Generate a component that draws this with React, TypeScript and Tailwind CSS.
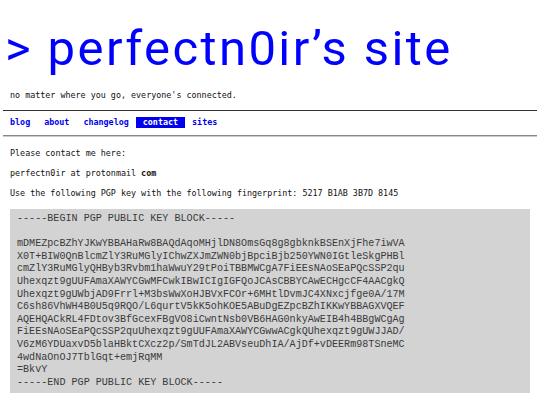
const links = ["blog", "about", "changelog", "contact", "sites"];

const pgpKey = `-----BEGIN PGP PUBLIC KEY BLOCK-----

mDMEZpcBZhYJKwYBBAHaRw8BAQdAqoMHjlDN8OmsGq8g8gbknkBSEnXjFhe7iwVA
X0T+BIW0QnBlcmZlY3RuMGlyIChwZXJmZWN0bjBpciBjb250YWN0IGtleSkgPHBl
cmZlY3RuMGlyQHByb3Rvbm1haWwuY29tPoiTBBMWCgA7FiEEsNAoSEaPQcSSP2qu
Uhexqzt9gUUFAmaXAWYCGwMFCwkIBwICIgIGFQoJCAsCBBYCAwECHgcCF4AACgkQ
Uhexqzt9gUWbjAD9Frrl+M3bsWwXoHJBVxFCOr+6MHtlDvmJC4XNxcjfge0A/17M
C6sh86VhWH4B0U5q9RQO/L6qurtV5kK5ohKOE5ABuDgEZpcBZhIKKwYBBAGXVQEF
AQEHQACkRL4FDtov3BfGcexFBgVO8iCwntNsb0VB6HAG0nkyAwEIB4h4BBgWCgAg
FiEEsNAoSEaPQcSSP2quUhexqzt9gUUFAmaXAWYCGwwACgkQUhexqzt9gUWJJAD/
V6zM6YDUaxvD5blaHBktCXcz2p/SmTdJL2ABVseuDhIA/AjDf+vDEERm98TSneMC
4wdNaOnOJ7TblGqt+emjRqMM
=BkvY
-----END PGP PUBLIC KEY BLOCK-----`;

function Nav({ active }: { active: string }) {
  return (
    <nav className="mt-[6px] flex">
      {links.map((l) => (
        <a
          key={l}
          href={`#${l}`}
          className={
            l === active
              ? "bg-[#0000ee] px-[7px] font-bold leading-[11px] text-white"
              : "px-[7px] font-bold leading-[11px] text-[#0000ee]"
          }
        >
          {l}
        </a>
      ))}
    </nav>
  );
}

export default function App() {
  return (
    <div className="min-h-[405px] bg-white px-[3px] font-['DejaVu_Sans_Mono',monospace] text-[8.4px] text-[#111]">
      <h1 className="pl-[2px] pt-[24px] font-['Roboto',sans-serif] text-[49px] font-normal leading-none tracking-[2.4px] text-[#0000ff]">
        &gt; perfectn0ir’s site
      </h1>
      <p className="mt-[17px] pl-[7px] leading-[10px]">
        no matter where you go, everyone's connected.
      </p>
      <div className="mt-[10px] border-t border-[#333]" />
      <Nav active="contact" />
      <div className="mt-[7px] border-t border-b border-t-[#888] border-b-[#ccc]" />
      <main className="pl-[7px]">
        <p className="mt-[11px] leading-[10px]">Please contact me here:</p>
        <p className="mt-[10px] leading-[10px]">
          perfectn0ir at protonmail <b>com</b>
        </p>
        <p className="mt-[10px] leading-[10px]">
          Use the following PGP key with the following fingerprint: 5217 B1AB 3B7D 8145
        </p>
        <pre className="mt-[11px] w-[520px] bg-[#d3d3d3] px-[7px] py-[4px] font-['Liberation_Mono',monospace] text-[10.1px] leading-[12.6px] text-[#3a3a3a]">
          {pgpKey}
        </pre>
      </main>
    </div>
  );
}
